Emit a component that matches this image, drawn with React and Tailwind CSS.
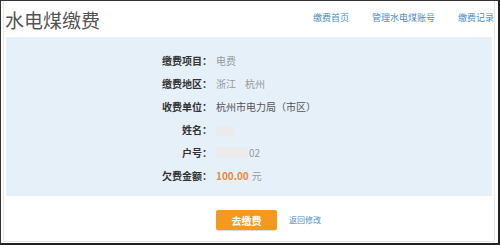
export default function App() {
  const font = { fontFamily: '"Noto Sans CJK SC", "Noto Sans", sans-serif' };
  const rows = [
    { label: "缴费项目：", value: <span className="text-[#9a9a9a]">电费</span> },
    {
      label: "缴费地区：",
      value: (
        <span className="text-[#9a9a9a]">
          浙江<span className="ml-[9px]">杭州</span>
        </span>
      ),
    },
    { label: "收费单位：", value: <span className="text-[#555]">杭州市电力局（市区）</span> },
    { label: "姓名：", value: <span className="inline-block h-[10px] w-[18px] bg-[#ebebeb] align-middle" /> },
    {
      label: "户号：",
      value: (
        <span className="flex items-center text-[#9a9a9a]">
          <span className="inline-block h-[11px] w-[32px] bg-[#ebebeb]" />
          <span className="ml-[1px]">02</span>
        </span>
      ),
    },
    {
      label: "欠费金额：",
      value: (
        <span>
          <span className="font-semibold text-[#e8893a]">100.00</span>
          <span className="ml-[3px] text-[#9a9a9a]">元</span>
        </span>
      ),
    },
  ];

  return (
    <div className="h-[245px] w-[500px] overflow-hidden bg-white" style={font}>
      <div className="h-full w-full border-l border-t border-r-2 border-b-2 border-l-[#333] border-t-[#333] border-r-[#222] border-b-[#222]">
        <div className="ml-[2px] mr-[3px] h-[241px] border-x border-b border-[#e6e6e6]">
          {/* header */}
          <div className="flex h-[36px] items-center justify-between pl-[1px]">
            <h1 className="text-[19px] leading-none text-[#555]">水电煤缴费</h1>
            <div className="flex items-center gap-[23px] pb-[3px] text-[9px] text-[#4a8fc9]">
              <a className="ml-auto">缴费首页</a>
              <a>管理水电煤账号</a>
              <a>缴费记录</a>
            </div>
          </div>

          {/* info panel */}
          <div className="mx-[2px] h-[159px] bg-[#e5f0f9] pt-[12px]">
            {rows.map((r) => (
              <div key={r.label} className="flex h-[23px] items-center text-[10px]">
                <div className="w-[206px] text-right font-bold text-[#333]">{r.label}</div>
                <div className="ml-[4px]">{r.value}</div>
              </div>
            ))}
          </div>

          {/* actions */}
          <div className="flex items-center pt-[14px]">
            <button className="ml-[212px] h-[20px] w-[61px] rounded-[2px] bg-[#f39a1e] text-[10px] font-semibold text-white shadow-[0_1px_1px_rgba(0,0,0,0.15)]">
              去缴费
            </button>
            <a className="ml-[12px] text-[8px] text-[#4a8fc9]">返回修改</a>
          </div>
        </div>
      </div>
    </div>
  );
}
